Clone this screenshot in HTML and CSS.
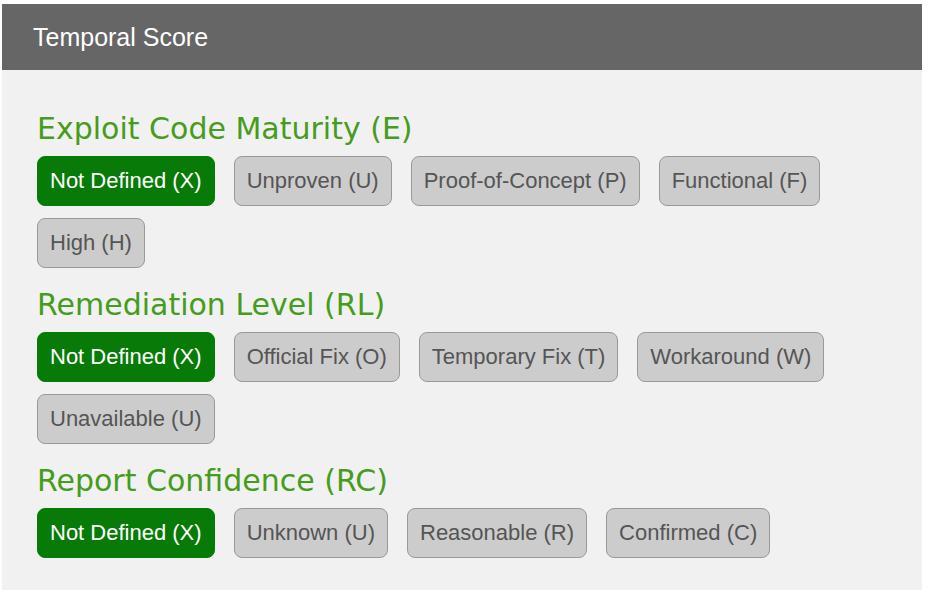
FILE: index.html
```html
<!DOCTYPE html>
<html lang="en">
<head>
  <meta charset="UTF-8" />
  <title>Temporal Score</title>
  <link rel="stylesheet" href="styles.css">
</head>
<body>
  <div class="panel">
    <div class="panel-head">Temporal Score</div>
    <div class="panel-body">
      <div class="metric">
        <h3>Exploit Code Maturity (E)</h3>
        <div class="choices">
          <button class="choice selected">Not Defined (X)</button>
          <button class="choice">Unproven (U)</button>
          <button class="choice">Proof-of-Concept (P)</button>
          <button class="choice">Functional (F)</button>
          <button class="choice">High (H)</button>
        </div>
      </div>
      <div class="metric">
        <h3>Remediation Level (RL)</h3>
        <div class="choices">
          <button class="choice selected">Not Defined (X)</button>
          <button class="choice">Official Fix (O)</button>
          <button class="choice">Temporary Fix (T)</button>
          <button class="choice">Workaround (W)</button>
          <button class="choice">Unavailable (U)</button>
        </div>
      </div>
      <div class="metric">
        <h3>Report Confidence (RC)</h3>
        <div class="choices">
          <button class="choice selected">Not Defined (X)</button>
          <button class="choice">Unknown (U)</button>
          <button class="choice">Reasonable (R)</button>
          <button class="choice">Confirmed (C)</button>
        </div>
      </div>
    </div>
  </div>
</body>
</html>
```

FILE: styles.css
```css
body {
  margin: 4px 6px 0 2px;
  background-color: #fff;
  font-family: "Liberation Sans", Arial, sans-serif;
}
.panel {
  background-color: #f1f1f1;
}
.panel-head {
  height: 66px;
  line-height: 66px;
  padding-left: 31px;
  background-color: #666;
  color: #fff;
  font-size: 25px;
}
.panel-body {
  padding: 42px 35px 32px;
}
.metric + .metric {
  margin-top: 20px;
}
.metric h3 {
  margin: 0 0 10px;
  font-family: "DejaVu Sans", sans-serif;
  font-weight: normal;
  font-size: 30px;
  line-height: 34px;
  color: #469c1c;
}
.choices {
  display: flex;
  flex-wrap: wrap;
  gap: 12px 19px;
}
.choice {
  height: 50px;
  padding: 0 12px;
  border: 1px solid #999;
  border-radius: 8px;
  background-color: #ccc;
  color: #555;
  font-family: "Liberation Sans", Arial, sans-serif;
  font-size: 22px;
  cursor: pointer;
}
.choice.selected {
  background-color: #077a07;
  border-color: #077a07;
  color: #fff;
}
```
